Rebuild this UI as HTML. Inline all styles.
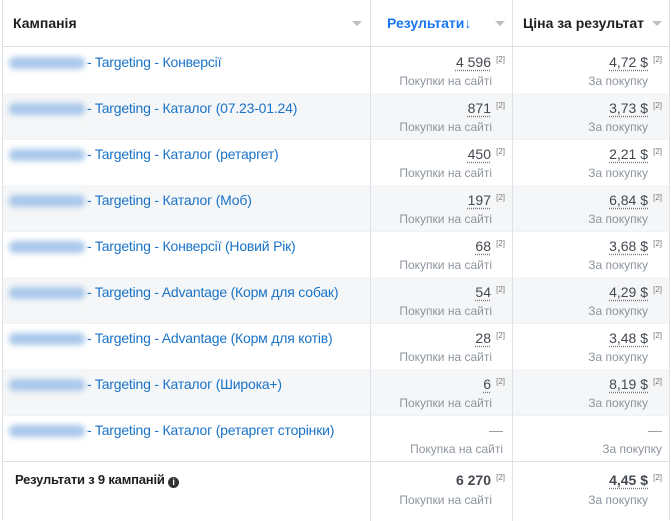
<html><head><style>
body{margin:0;width:671px;height:520px;overflow:hidden;background:#fff;font-family:"Liberation Sans",Arial,sans-serif;}
.t{position:absolute;left:2px;top:0;width:666px;height:520px;border-left:1px solid #e0e2e5;border-right:1px solid #e0e2e5;}
.row{position:absolute;left:0;width:666px;height:46px;border-bottom:1px solid #f0f1f2}
.g{background:#f5f6f7}
.c1,.c2,.c3{position:absolute;top:0;height:100%}
.c1{left:0;width:367px;}
.c2{left:367px;width:142px;border-left:1px solid #e0e2e5}
.c3{left:509px;width:157px;border-left:1px solid #e0e2e5}
.name{position:absolute;left:6px;top:7px;font-size:14px;color:#1a73c8;white-space:nowrap;letter-spacing:-0.2px}
.blur{display:inline-block;width:76px;height:12px;background:#a9c8ea;filter:blur(3px);vertical-align:middle;margin-right:2px;border-radius:5px}
.v{position:absolute;right:22px;top:7px;font-size:14px;color:#444950;text-decoration:underline dotted #777;text-underline-offset:3px;line-height:16px}
.s{position:absolute;right:8px;top:8px;font-size:8px;color:#777}
.l{position:absolute;right:21px;top:27px;font-size:12px;color:#8d949e;line-height:14px}
.c3 .v{right:22px}.c3 .l{right:22px}
.hd{position:absolute;top:0;left:0;width:666px;height:46px;border-bottom:1px solid #dddfe2}
.h{position:absolute;top:15px;font-size:14px;font-weight:bold;color:#1c1e21}
.tri{position:absolute;top:21px;width:0;height:0;border-left:5px solid transparent;border-right:5px solid transparent;border-top:5px solid #bcc0c4}
</style></head><body><div class="t">
<div class="hd"><div class="c1"><span class="h" style="left:10px">Кампанія</span><i class="tri" style="right:8px"></i></div>
<div class="c2"><span class="h" style="left:16px;color:#1877f2">Результати↓</span><i class="tri" style="right:8px"></i></div>
<div class="c3"><span class="h" style="left:10px">Ціна за результат</span><i class="tri" style="right:8px"></i></div></div>
<div id="rows"></div>
<div class="row" style="top:461px;height:59px;border-top:1px solid #dddfe2;border-bottom:none">
<div class="c1"><span class="name" style="color:#1c1e21;font-weight:bold;font-size:13px;left:12px;top:10px">Результати з 9 кампаній <span style="display:inline-block;width:11px;height:11px;border-radius:50%;background:#333;color:#fff;font-size:9px;text-align:center;line-height:11px;vertical-align:-1px">i</span></span></div>
<div class="c2"><span class="v" style="font-weight:bold;text-decoration:none;top:10px">6 270</span><span class="s" style="top:11px">[2]</span><span class="l" style="top:31px">Покупки на сайті</span></div>
<div class="c3"><span class="v" style="font-weight:bold;top:10px">4,45 $</span><span class="s" style="top:11px">[2]</span><span class="l" style="top:31px">За покупку</span></div></div>
</div>
<script>
var d=[["- Targeting - Конверсії","4 596","4,72 $"],["- Targeting - Каталог (07.23-01.24)","871","3,73 $"],["- Targeting - Каталог (ретаргет)","450","2,21 $"],["- Targeting - Каталог (Моб)","197","6,84 $"],["- Targeting - Конверсії (Новий Рік)","68","3,68 $"],["- Targeting - Advantage (Корм для собак)","54","4,29 $"],["- Targeting - Advantage (Корм для котів)","28","3,48 $"],["- Targeting - Каталог (Широка+)","6","8,19 $"],["- Targeting - Каталог (ретаргет сторінки)","—","—"]];
var h="";d.forEach(function(r,i){var last=i==8;h+='<div class="row'+(i%2?' g':'')+'" style="top:'+(47+i*46)+'px"><div class="c1"><span class="name"><span class="blur"></span>'+r[0]+'</span></div><div class="c2">'+(last?'<span class="v" style="text-decoration:none;color:#999;right:10px">—</span><span class="l" style="right:10px">Покупка на сайті</span>':'<span class="v">'+r[1]+'</span><span class="s">[2]</span><span class="l">Покупки на сайті</span>')+'</div><div class="c3">'+(last?'<span class="v" style="text-decoration:none;color:#999;right:8px">—</span><span class="l" style="right:8px">За покупку</span>':'<span class="v">'+r[2]+'</span><span class="s">[2]</span><span class="l">За покупку</span>')+'</div></div>';});
document.getElementById("rows").innerHTML=h;
</script></body></html>
